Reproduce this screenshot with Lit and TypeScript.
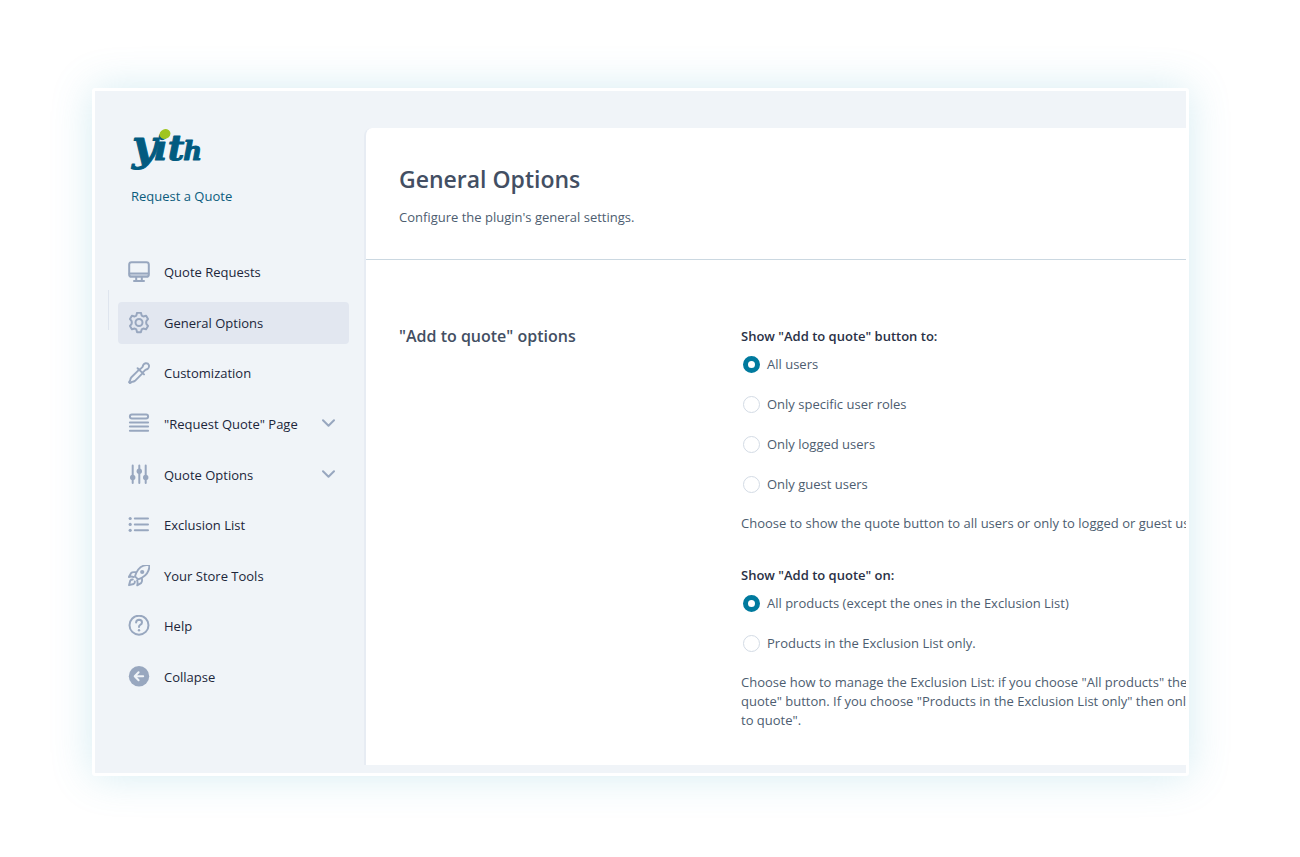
import { LitElement, html, css, svg, nothing } from "lit";
import { customElement, state } from "lit/decorators.js";

type NavItem = { label: string; icon: unknown; kind?: "group" | "action" };
type Field = { name: string; title: string; options: string[]; help: string[] };

const icons = {
  monitor: svg`<rect x="1.2" y="1.2" width="19.6" height="14.6" rx="2.4"/><path d="M1.4 12.4h19.2" stroke-width="1.6"/><path d="M1.6 14h18.8" stroke-opacity=".5"/><path d="M8.2 16.2v3.2M13.8 16.2v3.2M6 20h10"/>`,
  gear: svg`<path stroke-linejoin="round" d="M9.1 .8h3.8l.8 2.8 1.6.9 2.8-.7 1.9 3.3-1.500 1.800q-.6 1.600 0 3.200l1.500 1.800-1.900 3.300-2.800-.7-1.600.9-.8 2.800H9.100l-.8-2.800-1.600-.9-2.800.7L2 13.900l1.500-1.800q.6-1.600 0-3.200L2 7.100l1.900-3.300 2.800.7 1.600-.9z"/><circle cx="11" cy="10.500" r="3.500"/>`,
  dropper: svg`<path stroke-width="1.900" stroke-linejoin="round" d="M11.400 7.400 3.400 15.200Q2.400 16.200 2.200 18.200L1 20.200l.9.900 2.100-1.200q2-.2 3-1.100l7.900-7.900M9.600 6.200l6.400 6.200M11.800 7.600l2.800-2.800q.5-3 3.100-3.500 2.400-.2 3.200 1.800.6 2.400-1.300 3.900l-2.200.9-2.500 2.500"/>`,
  rows: svg`<rect x="1.900" y="1.600" width="18.200" height="4" rx="2"/><path d="M1.900 9.400h18.200M1.900 13.600h18.200M1.900 17.800h18.200"/>`,
  sliders: svg`<path d="M4.700 1.500v17.500M11.300 1.500v17.500M17.700 1.500v17.500"/><g fill="currentColor" stroke="none"><circle cx="4.700" cy="13.500" r="2.700"/><circle cx="11.300" cy="7.200" r="2.700"/><circle cx="17.700" cy="13.500" r="2.700"/></g>`,
  list: svg`<path d="M6.800 4.500h13.200M6.800 10.400h13.200M6.800 16.300h13.200"/><g fill="currentColor" stroke="none"><circle cx="2.200" cy="4.500" r="1.600"/><circle cx="2.200" cy="10.400" r="1.600"/><circle cx="2.200" cy="16.300" r="1.600"/></g>`,
  rocket: svg`<g transform="translate(0 -1)"><g stroke-width="1.900" stroke-linejoin="round"><path d="M7 12.300q2.600-8.600 8.600-10.600Q18.400.7 21.400.8q.1 3-1 5.900-2.100 5.900-10.300 8.700z"/><path d="M8 8.300q-3.700-.7-5 .9L.8 13q2.300-.9 5 .1M13.800 14.100q.8 3.700-.8 5.100L9.200 21.300q.8-2.400-.1-5"/><path d="M4.800 15.500q-1.600-.2-2.500 1L1 21.200l4.600-1.200q1.500-1 1.200-2.600"/></g><circle cx="14.200" cy="8" r="2.100" fill="currentColor" stroke="none"/></g>`,
  help: svg`<circle cx="11" cy="10.200" r="9.500"/><path d="M8.100 7.500q.2-2.700 3-2.700 2.900.1 2.900 2.600 0 1.600-1.800 2.400-1.200.6-1.200 2.200"/><circle cx="11" cy="15.200" r="1.200" fill="currentColor" stroke="none"/>`,
  back: svg`<circle cx="11" cy="10.200" r="10.200" fill="currentColor" stroke="none"/><path stroke="#f0f4f8" stroke-linejoin="round" d="M15.200 10.200H7M10.600 6.200 6.700 10.200l3.900 4"/>`,
};

const navItems: NavItem[] = [
  { label: "Quote Requests", icon: icons.monitor },
  { label: "General Options", icon: icons.gear },
  { label: "Customization", icon: icons.dropper },
  { label: '"Request Quote" Page', icon: icons.rows, kind: "group" },
  { label: "Quote Options", icon: icons.sliders, kind: "group" },
  { label: "Exclusion List", icon: icons.list },
  { label: "Your Store Tools", icon: icons.rocket },
  { label: "Help", icon: icons.help },
  { label: "Collapse", icon: icons.back, kind: "action" },
];

const fields: Field[] = [
  {
    name: "audience",
    title: 'Show "Add to quote" button to:',
    options: ["All users", "Only specific user roles", "Only logged users", "Only guest users"],
    help: ["Choose to show the quote button to all users or only to logged or guest users."],
  },
  {
    name: "products",
    title: 'Show "Add to quote" on:',
    options: ["All products (except the ones in the Exclusion List)", "Products in the Exclusion List only."],
    help: [
      'Choose how to manage the Exclusion List: if you choose "All products" then',
      'quote" button. If you choose "Products in the Exclusion List only" then only',
      'to quote".',
    ],
  },
];

@customElement("plugin-sidebar")
class PluginSidebar extends LitElement {
  @state() private active = "General Options";

  static styles = css`
    :host {
      display: block;
      position: relative;
      box-sizing: border-box;
      padding: 0 15px 0 23px;
    }
    :host::before {
      content: "";
      position: absolute;
      left: 13px;
      top: 199px;
      width: 1px;
      height: 40px;
      background: #dfe5ee;
    }
    .brand {
      padding-left: 13px;
      color: #0b5c7d;
    }
    .logo {
      display: block;
      width: 76px;
      height: 50px;
      overflow: visible;
    }
    .word {
      font-family: "DejaVu Serif", serif;
      font-size: 36px;
      font-weight: 700;
      font-style: italic;
      fill: #025b80;
      stroke: #025b80;
      stroke-width: 1px;
      stroke-linejoin: round;
    }
    .lead {
      font-size: 43px;
    }
    .tail {
      font-size: 26px;
    }
    .product {
      margin: 8px 0 0;
      font-size: 13px;
      font-weight: 500;
      line-height: 20px;
    }
    nav {
      display: flex;
      flex-direction: column;
      justify-content: space-between;
      height: 447px;
      margin-top: 45px;
    }
    .item {
      display: flex;
      align-items: center;
      gap: 14px;
      box-sizing: border-box;
      width: 100%;
      height: 42px;
      padding: 0 14px 0 10px;
      border: 0;
      border-radius: 4px;
      background: none;
      color: #20263a;
      font: inherit;
      font-size: 13px;
      font-weight: 500;
      line-height: 20px;
      text-align: left;
      text-decoration: none;
      white-space: nowrap;
      cursor: pointer;
    }
    .item.active {
      background: #e2e7f0;
    }
    .label {
      flex: 1;
    }
    .icon,
    .chevron {
      flex: none;
      fill: none;
      stroke: currentColor;
      stroke-width: 2;
      stroke-linecap: round;
      color: #98a7bf;
    }
  `;

  private renderItem(item: NavItem) {
    const cls = item.label === this.active ? "item active" : "item";
    const body = html`
      <svg class="icon" width="22" height="22" viewBox="0 0 22 22" aria-hidden="true">${item.icon}</svg>
      <span class="label">${item.label}</span>
      ${item.kind === "group"
        ? html`<svg class="chevron" width="13" height="10" viewBox="0 0 13 10" aria-hidden="true">
            <path stroke-linejoin="round" d="M1 1.200l5.500 5.500L12 1.200" />
          </svg>`
        : nothing}
    `;
    return item.kind
      ? html`<button class=${cls} type="button">${body}</button>`
      : html`<a class=${cls} href="#" @click=${(e: Event) => { e.preventDefault(); this.active = item.label; }}>${body}</a>`;
  }

  render() {
    return html`
      <div class="brand">
        <svg class="logo" viewBox="0 0 76 50">
          <text class="word" x="1" y="32"><tspan class="lead">y</tspan><tspan dx="-3">it</tspan><tspan class="tail" dx="-1">h</tspan></text>
          <ellipse cx="34" cy="6" rx="5.600" ry="4.800" fill="#a0c520" transform="rotate(-25 34 6)" />
        </svg>
        <p class="product">Request a Quote</p>
      </div>
      <nav>${navItems.map((i) => this.renderItem(i))}</nav>
    `;
  }
}

@customElement("radio-field")
class RadioField extends LitElement {
  static properties = { field: { attribute: false } };
  declare field: Field;

  static styles = css`
    :host {
      display: block;
    }
    fieldset {
      display: grid;
      gap: 20px;
      margin: 0;
      padding: 0;
      border: 0;
      min-width: 0;
    }
    legend {
      margin-bottom: 8px;
      padding: 0;
      color: #2a3146;
      font-weight: 600;
    }
    label {
      display: flex;
      align-items: center;
      gap: 7px;
      padding-left: 2px;
      cursor: pointer;
    }
    input {
      appearance: none;
      box-sizing: border-box;
      flex: none;
      width: 17px;
      height: 17px;
      margin: 0;
      border: 1px solid #d3dbe5;
      border-radius: 50%;
      background: #fff;
    }
    input:checked {
      border: 5px solid #007a9e;
    }
    .help {
      margin: 20px 0 0;
      line-height: 19px;
    }
  `;

  render() {
    const f = this.field;
    return html`
      <fieldset>
        <legend>${f.title}</legend>
        ${f.options.map(
          (o, i) => html`<label><input type="radio" name=${f.name} ?checked=${i === 0} />${o}</label>`
        )}
      </fieldset>
      <p class="help">${f.help.map((line, i) => html`${i ? html`<br />` : nothing}${line}`)}</p>
    `;
  }
}

@customElement("app-root")
class AppRoot extends LitElement {
  static styles = css`
    :host {
      display: block;
      box-sizing: border-box;
      min-height: 100vh;
      padding: 88px 111px 81px 92px;
      background: #fff;
      color: #4d5d70;
      font-family: "Open Sans", "Noto Sans", sans-serif;
      font-size: 13px;
      line-height: 20px;
    }
    .window {
      display: grid;
      grid-template-columns: 269px minmax(0, 1fr);
      border: 3px solid #fff;
      border-radius: 3px;
      background: #f0f4f8;
      box-shadow: 0 0 42px rgba(80, 175, 200, 0.24);
      overflow: hidden;
    }
    plugin-sidebar {
      padding-top: 37px;
    }
    main {
      margin: 37px 0 8px;
      border-left: 2px solid #e7ecf3;
      border-top-left-radius: 8px;
      background: #fff;
      overflow: hidden;
      white-space: nowrap;
    }
    header {
      padding: 35px 33px 32px;
      border-bottom: 1px solid #cbd8e1;
    }
    h1 {
      margin: 0;
      color: #434f63;
      font-size: 23px;
      font-weight: 600;
      line-height: 32px;
    }
    .lead {
      margin: 12px 0 0;
    }
    .section {
      display: grid;
      grid-template-columns: 342px minmax(0, 1fr);
      padding: 66px 0 35px 33px;
    }
    h2 {
      margin: 0;
      color: #434f63;
      font-size: 16px;
      font-weight: 600;
      line-height: 20px;
    }
    .fields {
      display: grid;
      gap: 32px;
    }
  `;

  render() {
    return html`
      <div class="window">
        <plugin-sidebar></plugin-sidebar>
        <main>
          <header>
            <h1>General Options</h1>
            <p class="lead">Configure the plugin's general settings.</p>
          </header>
          <section class="section">
            <h2>"Add to quote" options</h2>
            <div class="fields">${fields.map((f) => html`<radio-field .field=${f}></radio-field>`)}</div>
          </section>
        </main>
      </div>
    `;
  }
}
